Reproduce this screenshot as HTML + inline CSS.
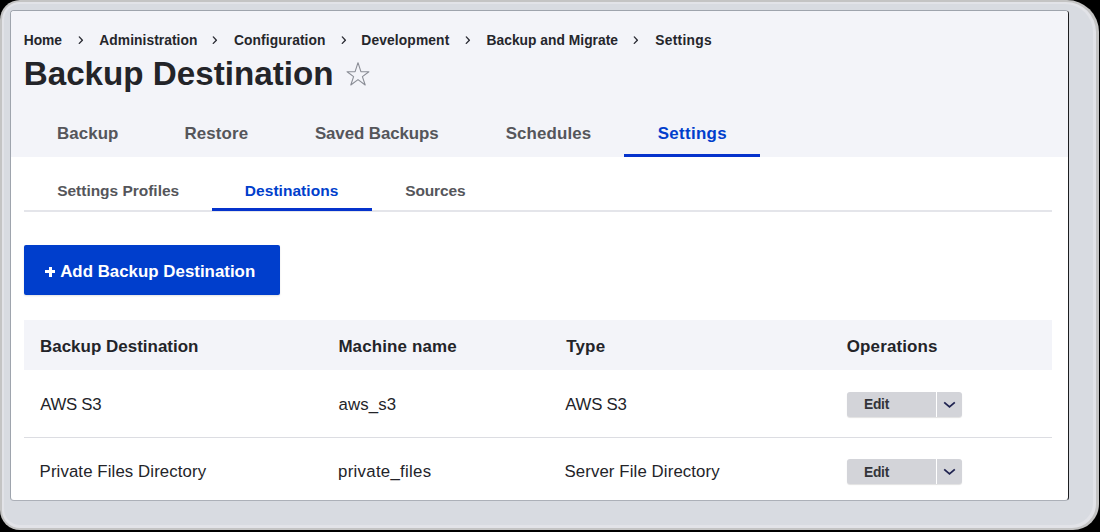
<!DOCTYPE html>
<html><head><meta charset="utf-8">
<style>
*{margin:0;padding:0;box-sizing:border-box}
html,body{width:1100px;height:532px;overflow:hidden;background:#000}
body{position:relative;font-family:"Liberation Sans",sans-serif}
.a{position:absolute;white-space:nowrap;line-height:1}
#edge{position:absolute;left:0;top:0;width:1099px;height:530px;background:#c4c4c4;border-radius:20px 32px 26px 20px}
#ring{position:absolute;left:2px;top:2px;width:1094px;height:526px;background:#e2e3e8;border-radius:18px 30px 24px 18px}
#shadow{position:absolute;left:4px;top:4px;width:1089px;height:521px;background:#d8dbe1;border-radius:16px 28px 22px 16px}
#win{position:absolute;left:10px;top:10px;width:1059px;height:491px;background:#fff;border:1px solid #9ea4ad;border-right-color:#1c1d20;border-bottom-color:#acb0b8;border-radius:4px;overflow:hidden}
#hdr{position:absolute;left:0;top:0;width:100%;height:146px;background:#f3f4f9}
.r{position:absolute}
.db{position:absolute;width:115px;height:25px;background:#d3d4d9;border-radius:3px;box-shadow:0 1px 1px rgba(0,0,0,.12)}
.db .s{position:absolute;left:89px;top:0;width:1px;height:25px;background:#fff}
</style></head><body>
<div id="edge"></div>
<div id="ring"></div>
<div id="shadow"></div>
<div id="win"><div id="hdr"></div></div>
<svg class="r" style="left:344px;top:60px" width="28" height="28" viewBox="0 0 28 28"><polygon points="14,2.7 16.9,11.7 24.9,11.7 18.4,16.6 21.2,25.0 14,19.6 6.8,25.0 9.6,16.6 3.1,11.7 11.1,11.7" fill="none" stroke="#8a8d96" stroke-width="1.1" stroke-linejoin="round"/></svg>
<div class="r" style="left:624px;top:154px;width:136px;height:3px;background:#0533cc"></div>
<div class="r" style="left:24px;top:210px;width:1028px;height:2px;background:#e4e5ea"></div>
<div class="r" style="left:212px;top:208px;width:160px;height:3px;background:#0533cc"></div>
<div class="r" style="left:24px;top:245px;width:256px;height:50px;background:#003ecc;border-radius:2px;box-shadow:0 1px 2px rgba(0,0,0,.12)"></div>
<div class="r" style="left:45.3px;top:270.3px;width:10.2px;height:2.5px;background:#fff"></div><div class="r" style="left:49.1px;top:266.6px;width:2.7px;height:10px;background:#fff"></div>
<div class="r" style="left:24px;top:320px;width:1028px;height:50px;background:#f3f4f9"></div>
<div class="r" style="left:24px;top:437px;width:1028px;height:1px;background:#dcdde2"></div>
<div class="db" style="left:847px;top:392px"><span class="s"></span><svg width="16" height="10" viewBox="0 0 16 10" style="position:absolute;left:95px;top:8px"><path d="M2.2 2.4 L7.5 6.9 L12.8 2.4" fill="none" stroke="#1f2350" stroke-width="1.8"/></svg></div><div class="db" style="left:847px;top:459px"><span class="s"></span><svg width="16" height="10" viewBox="0 0 16 10" style="position:absolute;left:95px;top:8px"><path d="M2.2 2.4 L7.5 6.9 L12.8 2.4" fill="none" stroke="#1f2350" stroke-width="1.8"/></svg></div>
<svg class="r" style="left:77.8px;top:35px" width="6" height="10" viewBox="0 0 6 10"><path d="M1.3 1.9 L4.4 5.2 L1.3 8.4" fill="none" stroke="#2a2b33" stroke-width="1.35" stroke-linecap="round" stroke-linejoin="round"/></svg><svg class="r" style="left:212.0px;top:35px" width="6" height="10" viewBox="0 0 6 10"><path d="M1.3 1.9 L4.4 5.2 L1.3 8.4" fill="none" stroke="#2a2b33" stroke-width="1.35" stroke-linecap="round" stroke-linejoin="round"/></svg><svg class="r" style="left:340.8px;top:35px" width="6" height="10" viewBox="0 0 6 10"><path d="M1.3 1.9 L4.4 5.2 L1.3 8.4" fill="none" stroke="#2a2b33" stroke-width="1.35" stroke-linecap="round" stroke-linejoin="round"/></svg><svg class="r" style="left:465.0px;top:35px" width="6" height="10" viewBox="0 0 6 10"><path d="M1.3 1.9 L4.4 5.2 L1.3 8.4" fill="none" stroke="#2a2b33" stroke-width="1.35" stroke-linecap="round" stroke-linejoin="round"/></svg><svg class="r" style="left:633.4px;top:35px" width="6" height="10" viewBox="0 0 6 10"><path d="M1.3 1.9 L4.4 5.2 L1.3 8.4" fill="none" stroke="#2a2b33" stroke-width="1.35" stroke-linecap="round" stroke-linejoin="round"/></svg>
<span class="a" style="left:23.71px;top:33.80px;font-size:13.8px;font-weight:bold;color:#25262b;letter-spacing:-0.038px">Home</span><span class="a" style="left:99.34px;top:33.80px;font-size:13.8px;font-weight:bold;color:#25262b;letter-spacing:0.057px">Administration</span><span class="a" style="left:234.07px;top:33.80px;font-size:13.8px;font-weight:bold;color:#25262b;letter-spacing:0.08px">Configuration</span><span class="a" style="left:361.31px;top:33.80px;font-size:13.8px;font-weight:bold;color:#25262b;letter-spacing:0.131px">Development</span><span class="a" style="left:486.51px;top:33.80px;font-size:13.8px;font-weight:bold;color:#25262b;letter-spacing:0.022px">Backup and Migrate</span><span class="a" style="left:655.34px;top:33.80px;font-size:13.8px;font-weight:bold;color:#25262b;letter-spacing:0.264px">Settings</span><span class="a" style="left:23.71px;top:56.80px;font-size:33.2px;font-weight:bold;color:#232429;letter-spacing:0.005px">Backup Destination</span><span class="a" style="left:57.08px;top:125.60px;font-size:16.9px;font-weight:bold;color:#55565b;letter-spacing:0.042px">Backup</span><span class="a" style="left:184.38px;top:125.60px;font-size:16.9px;font-weight:bold;color:#55565b;letter-spacing:0.125px">Restore</span><span class="a" style="left:314.88px;top:125.60px;font-size:16.9px;font-weight:bold;color:#55565b;letter-spacing:-0.092px">Saved Backups</span><span class="a" style="left:505.68px;top:125.60px;font-size:16.9px;font-weight:bold;color:#55565b;letter-spacing:0.131px">Schedules</span><span class="a" style="left:657.68px;top:125.60px;font-size:16.9px;font-weight:bold;color:#003ecc;letter-spacing:0.328px">Settings</span><span class="a" style="left:57.19px;top:183.10px;font-size:15.5px;font-weight:bold;color:#55565b;letter-spacing:-0.022px">Settings Profiles</span><span class="a" style="left:244.84px;top:183.10px;font-size:15.5px;font-weight:bold;color:#003ecc;letter-spacing:0.041px">Destinations</span><span class="a" style="left:405.29px;top:183.10px;font-size:15.5px;font-weight:bold;color:#55565b;letter-spacing:-0.151px">Sources</span><span class="a" style="left:60.17px;top:263.50px;font-size:16.85px;font-weight:bold;color:#ffffff;letter-spacing:0.019px">Add Backup Destination</span><span class="a" style="left:39.98px;top:338.80px;font-size:16.95px;font-weight:bold;color:#232429;letter-spacing:0.02px">Backup Destination</span><span class="a" style="left:338.38px;top:338.80px;font-size:16.95px;font-weight:bold;color:#232429;letter-spacing:0.135px">Machine name</span><span class="a" style="left:566.13px;top:338.80px;font-size:16.95px;font-weight:bold;color:#232429;letter-spacing:0.229px">Type</span><span class="a" style="left:846.78px;top:338.80px;font-size:16.95px;font-weight:bold;color:#232429;letter-spacing:0.15px">Operations</span><span class="a" style="left:40.18px;top:396.90px;font-size:16.8px;font-weight:normal;color:#232429;letter-spacing:-0.284px">AWS S3</span><span class="a" style="left:338.55px;top:396.90px;font-size:16.8px;font-weight:normal;color:#232429;letter-spacing:0.111px">aws_s3</span><span class="a" style="left:565.28px;top:396.90px;font-size:16.8px;font-weight:normal;color:#232429;letter-spacing:-0.243px">AWS S3</span><span class="a" style="left:39.58px;top:463.70px;font-size:16.8px;font-weight:normal;color:#232429;letter-spacing:0.11px">Private Files Directory</span><span class="a" style="left:338.09px;top:463.70px;font-size:16.8px;font-weight:normal;color:#232429;letter-spacing:0.289px">private_files</span><span class="a" style="left:564.45px;top:463.70px;font-size:16.8px;font-weight:normal;color:#232429;letter-spacing:0.115px">Server File Directory</span><span class="a" style="left:863.91px;top:397.60px;font-size:13.8px;font-weight:bold;color:#33343a;letter-spacing:-0.222px">Edit</span><span class="a" style="left:863.91px;top:465.60px;font-size:13.8px;font-weight:bold;color:#33343a;letter-spacing:-0.222px">Edit</span>
</body></html>
